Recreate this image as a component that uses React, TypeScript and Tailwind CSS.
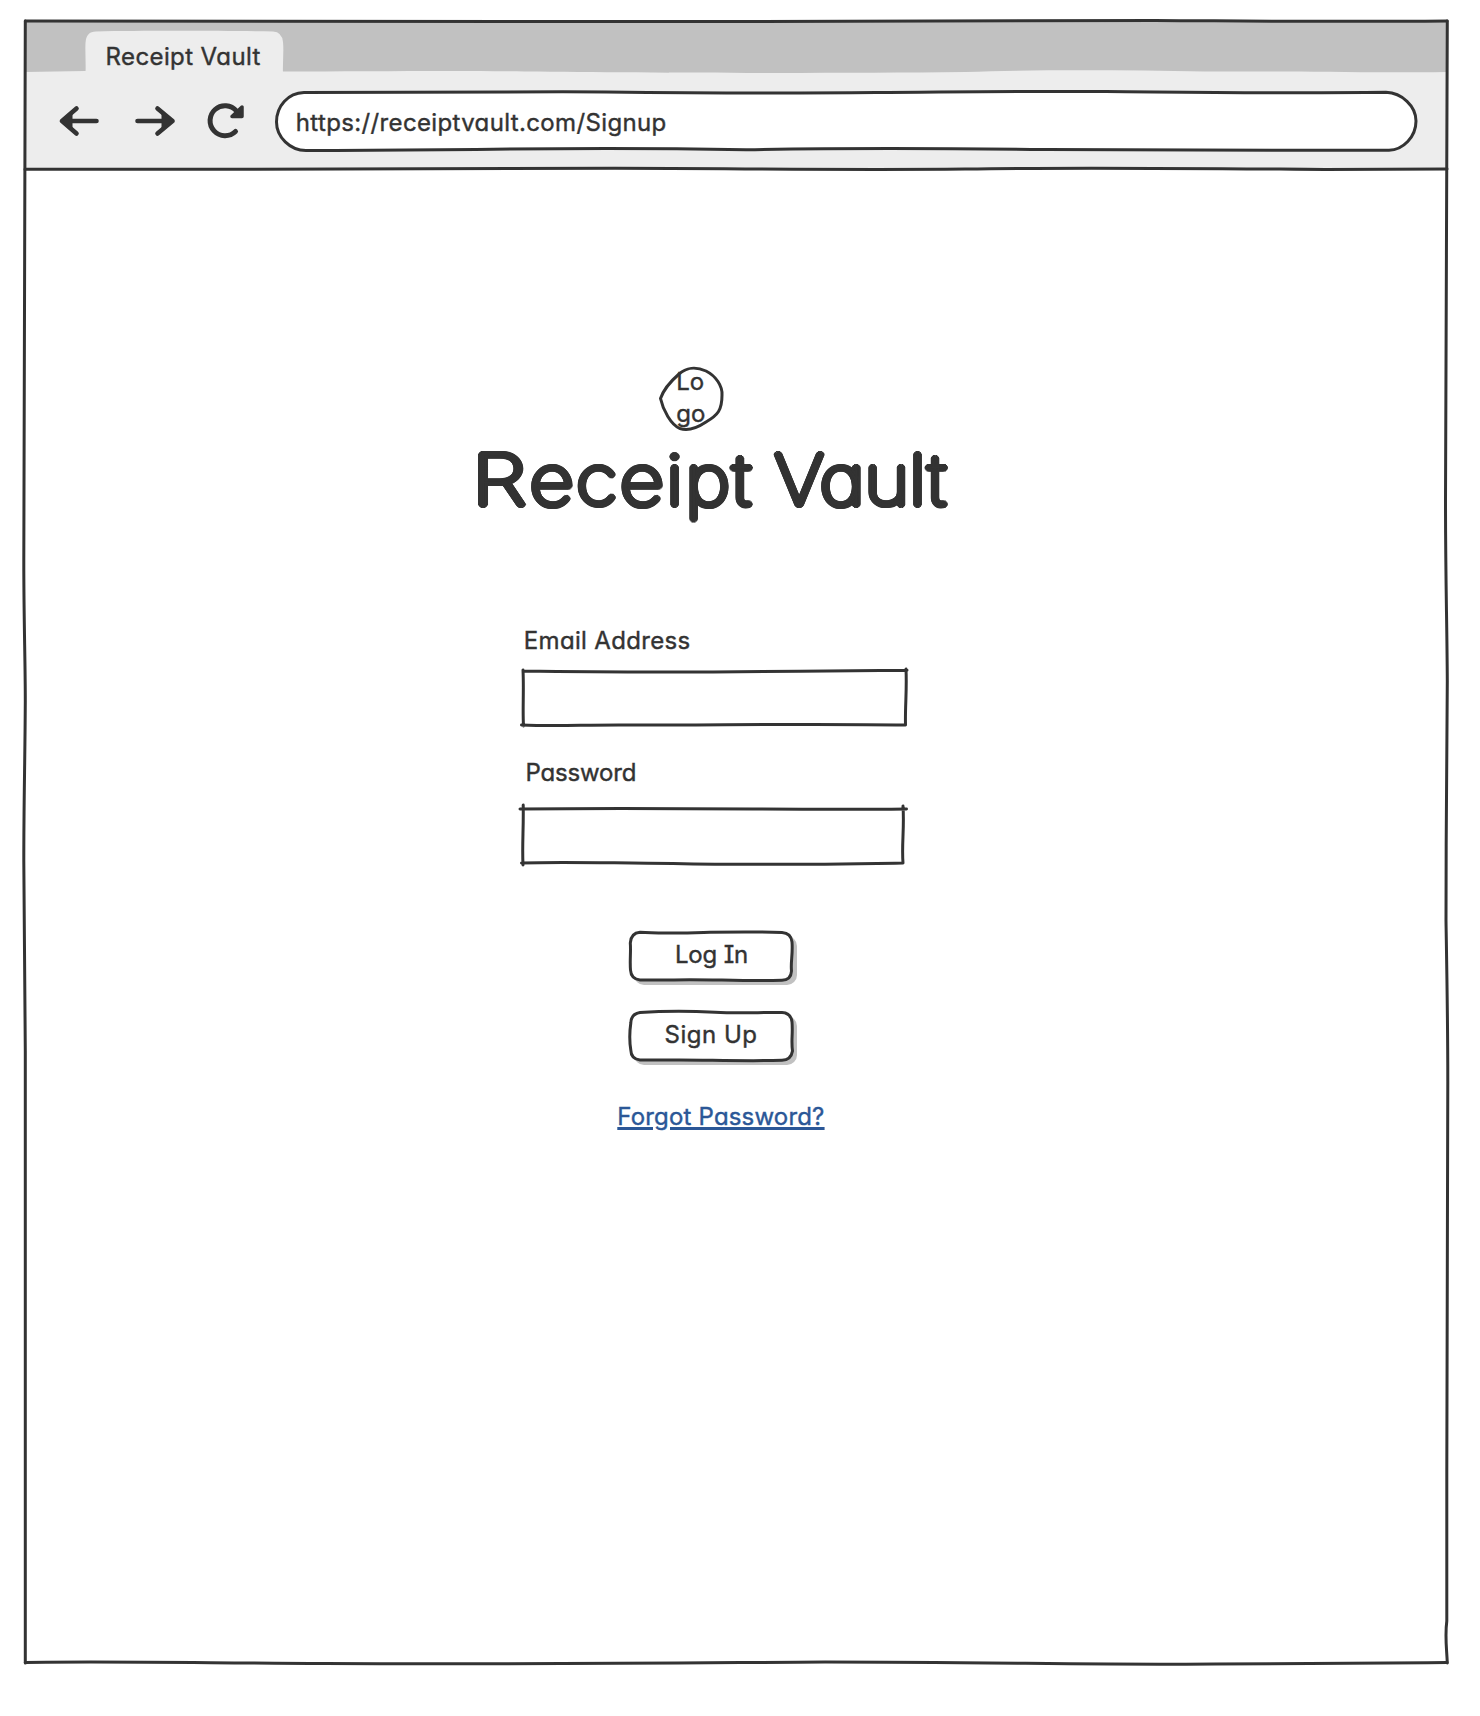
import type { ReactNode } from "react";

const INK = "#333333";
const lettering =
  "font-['Inter','Noto_Sans',sans-serif] whitespace-pre [font-feature-settings:'cv11','cv08']";
const small = "text-[24px] leading-8 text-[#333333] [-webkit-text-stroke:0.4px_#333333]";
// Rings of solid shadows thicken the thin letters and round off their ends.
const marker =
  "[text-shadow:3.1px_0_#333,2.86px_1.19px_#333,2.19px_2.19px_#333,1.19px_2.86px_#333,0_3.1px_#333,-1.19px_2.86px_#333,-2.19px_2.19px_#333,-2.86px_1.19px_#333,-3.1px_0_#333,-2.86px_-1.19px_#333,-2.19px_-2.19px_#333,-1.19px_-2.86px_#333,0_-3.1px_#333,1.19px_-2.86px_#333,2.19px_-2.19px_#333,2.86px_-1.19px_#333,1.6px_0_#333,1.1px_1.1px_#333,0_1.6px_#333,-1.1px_1.1px_#333,-1.6px_0_#333,-1.1px_-1.1px_#333,0_-1.6px_#333,1.1px_-1.1px_#333]";

function Sketch({ w, h, children }: { w: number; h: number; children: ReactNode }) {
  return (
    <svg
      className="pointer-events-none absolute left-0 top-0 overflow-visible"
      width={w}
      height={h}
      viewBox={`0 0 ${w} ${h}`}
      fill="none"
      stroke={INK}
      strokeWidth={3}
      strokeLinecap="round"
      strokeLinejoin="round"
      aria-hidden="true"
    >
      {children}
    </svg>
  );
}

function FrameOutline() {
  return (
    <Sketch w={1422} h={1642}>
      <path d="M.3 0C200 -.5 420 .8 700 .6C850 .5 1000 -1 1130 -.6C1230 0 1300 1 1422 0" />
      <path d="M1422.300 0C1422 180 1420.500 330 1420.500 480C1420.500 560 1422 600 1422.300 660C1422 760 1420.800 820 1421 900C1422 960 1422.800 1000 1422.800 1060C1422 1180 1421.300 1300 1421.800 1450V1600C1419.800 1615 1421.500 1625 1422.300 1642" />
      <path d="M.3 0C.5 200 -1 400 -1.200 540C-1.200 600 .3 640 .3 680C0 740 -1.200 780 -1.200 840C-1.200 900 .3 960 .3 1030V1642" />
      <path d="M.3 1641.500C80 1640 180 1642 300 1642.500C500 1643.500 640 1642 800 1641C960 1641 1080 1644 1190 1643C1280 1642.500 1350 1642 1422 1641.500" />
      <path d="M0 148.300C200 149 420 147 590 147.300C720 147.500 820 149.300 940 148C1060 146 1180 147.500 1300 148.500L1422 148" />
    </Sketch>
  );
}

function TabStrip() {
  return (
    <div className="relative flex h-[49px] shrink-0">
      <Sketch w={1422} h={49}>
        <path
          stroke="none"
          fill="#c1c1c1"
          d="M0 0H1422V51C1330 52 1260 50 1180 50.500C1100 49 1010 48.500 940 51C800 52.500 620 52 500 50.500C430 49.500 340 50.500 258 50.500L60 50L0 51Z"
        />
        <path
          stroke="none"
          fill="#ededed"
          d="M60.500 52C61 42 60 31 60.500 22Q61 10.500 71 10.500C120 9.500 200 9.800 248 10.500Q257 11 258 21C259 31 257.500 42 258 52Z"
        />
      </Sketch>
      <span className={`relative ml-[80.5px] mt-[20px] h-8 tracking-[0.4px] ${lettering} ${small}`}>Receipt Vault</span>
    </div>
  );
}

function Toolbar() {
  return (
    <div className="relative flex h-[99px] shrink-0 items-start">
      <svg className="ml-[32px] mt-[33px] h-[36px] w-[44px]" viewBox="57 103 44 36" fill="none" stroke={INK} strokeWidth="4.6" strokeLinecap="round" strokeLinejoin="round">
        <path d="M96.500 121H62L76.500 108.500M62 121L76.500 133.500" />
        <path d="M62 121L72 113.500V128.500Z" fill={INK} strokeWidth="1" />
      </svg>
      <svg className="ml-[32px] mt-[33px] h-[36px] w-[44px]" viewBox="133 103 44 36" fill="none" stroke={INK} strokeWidth="4.6" strokeLinecap="round" strokeLinejoin="round">
        <path d="M137.500 121H172.500L157.500 108.500M172.500 121L157.500 133.500" />
        <path d="M172 121L162 113.500V128.500Z" fill={INK} strokeWidth="1" />
      </svg>
      <svg className="ml-[26px] mt-[29px] h-[44px] w-[44px]" viewBox="203 99 44 44" fill="none" stroke={INK} strokeWidth="5" strokeLinecap="round" strokeLinejoin="round">
        <path d="M235.500 131.500A15 15 0 1 1 236.500 111" />
        <path d="M242 107V116.500H232Z" fill={INK} strokeWidth="3.5" />
      </svg>
      <div className="relative ml-[28.5px] mt-[21.5px] h-[58px] w-[1140px]">
        <Sketch w={1140} h={58}>
          <path
            fill="#ffffff"
            d="M28 .5C160 0 240 -.8 330 0C420 1 500 1.500 600 .5C680 0 740 -1 830 -.5C940 .5 1000 1.500 1110 .3C1126 1 1140 14 1140 29C1140 45 1127 58 1113 58.200C1000 58.500 900 58.500 770 57.500C650 56 560 56 470 57.700C400 56.500 300 56 200 57.500C120 58.500 80 58.500 30 58.500C14 58.500 .5 45 .5 30C.5 14 12 1 28 .5Z"
          />
        </Sketch>
        <span className={`relative ml-[20.3px] mt-[15px] block w-fit tracking-[0.36px] ${lettering} ${small}`}>
          https://receiptvault.com/Signup
        </span>
      </div>
    </div>
  );
}

function LogoMark() {
  return (
    <div className="relative ml-[635px] mt-[199px] h-[64px] w-[64px] shrink-0">
      <Sketch w={64} h={64}>
        <path d="M.5 30.500C3 23 11 13 19 6C26 -.5 36 -1.500 46 3C56 8 62.500 18 62 27C62 42 58 47 46 54C37 60 27 63 20 60.500C11 57 3 42 .5 30.500Z" />
      </Sketch>
      <span className={`relative block -translate-y-[2px] pl-[16.3px] ${lettering} ${small}`}>{"Lo\ngo"}</span>
    </div>
  );
}

function SketchInput({ label, type, children }: { label: string; type: string; children: ReactNode }) {
  return (
    <div className="relative ml-[497.5px] h-[54px] w-[383px] shrink-0">
      <Sketch w={383} h={54}>{children}</Sketch>
      <input aria-label={label} type={type} className="relative h-full w-full bg-transparent px-3 text-[22px] outline-none" />
    </div>
  );
}

function SketchButton({ className, d, children }: { className: string; d: string; children: ReactNode }) {
  return (
    <button type="button" className={`relative flex h-[49px] w-[163px] shrink-0 justify-center pt-[7.3px] ${className}`}>
      <Sketch w={163} h={49}>
        <rect x="4" y="4" width="163" height="49" rx="10" fill="#c1c1c1" stroke="none" />
        <path d={d} fill="#ffffff" />
      </Sketch>
      {children}
    </button>
  );
}

export default function App() {
  return (
    <div className="h-[1716px] w-[1480px] overflow-hidden bg-white pl-[25px] pt-[21px]">
      <div className="relative flex h-[1642px] w-[1422px] flex-col">
        <div className="flex h-[148px] shrink-0 flex-col bg-[#ededed]">
          <TabStrip />
          <Toolbar />
        </div>
        <main className="flex flex-col items-start">
          <LogoMark />
          <h1 className={`ml-[447.2px] mt-[6px] h-[84px] origin-left scale-x-110 text-[70px] font-thin leading-[84px] text-[#333333] ${marker} ${lettering}`}>
            <span className="mr-[9.4px] inline-block origin-left scale-x-[1.15]">R</span>
            <span className="tracking-[2.2px]">eceipt</span>
            <span className="tracking-[-0.5px]"> </span>
            <span className="tracking-[-0.1px]">Vault</span>
          </h1>
          <label className={`ml-[498.8px] mt-[102.5px] tracking-[0.33px] ${lettering} ${small}`}>Email Address</label>
          <div className="mt-[14.5px]">
            <SketchInput label="Email Address" type="email">
              <path d="M0 0C60 1 120 1.300 190 1C260 .5 310 -.5 384 -.7M0 -1C1 20 -.5 38 .5 55M-1.500 54C40 55.500 60 53.500 110 54C200 54 300 52.500 382 54M383 -2C384 20 382 35 382.500 54" />
            </SketchInput>
          </div>
          <label className={`ml-[500.5px] mt-[31.5px] tracking-[-0.18px] ${lettering} ${small}`}>Password</label>
          <div className="mt-[20.5px]">
            <SketchInput label="Password" type="password">
              <path d="M-3 0C80 -1 160 -.5 230 0C300 .5 340 .5 383.500 0M.2 -4C.7 20 -1 35 0 56M-1.500 54C40 52.500 80 54 150 54.500C240 56.500 320 55 380 54M380 -3C381.500 20 378.500 35 380 54" />
            </SketchInput>
          </div>
          <SketchButton
            className="ml-[605px] mt-[68.7px]"
            d="M10 .3C30 2 50 1 80 .3C110 -.2 130 -.2 152 .5Q161 1 162 10C163 22 160.500 30 161.500 39Q161 48 152 48.300C110 49.500 70 46.500 40 48L10 48Q1 47 .5 38C-.3 28 1 20 .3 11Q1 1 10 .3Z"
          >
            <span className={`relative tracking-[-0.2px] ${lettering} ${small}`}>Log In</span>
          </SketchButton>
          <SketchButton
            className="ml-[604.5px] mt-[31px]"
            d="M10 .5C30 -.8 60 -1 85 .2C110 1.700 130 .2 152 .5Q161 1 162 10C163 22 161 28 162.500 39Q161 48 152 48.300C110 49.500 70 47.500 40 48L10 48Q1 47 .8 38C-.5 30 -.5 20 .8 11Q1 2 10 .5Z"
          >
            <span className={`relative tracking-[0.5px] ${lettering} ${small}`}>Sign Up</span>
          </SketchButton>
          <a
            href="#forgot"
            className={`ml-[592.3px] mt-[40.3px] text-[24px] leading-8 tracking-[0.18px] text-[#2b5797] underline decoration-[2.5px] underline-offset-[2px] [-webkit-text-stroke:0.4px_#2b5797] ${lettering}`}
          >
            Forgot Password?
          </a>
        </main>
        <FrameOutline />
      </div>
    </div>
  );
}
